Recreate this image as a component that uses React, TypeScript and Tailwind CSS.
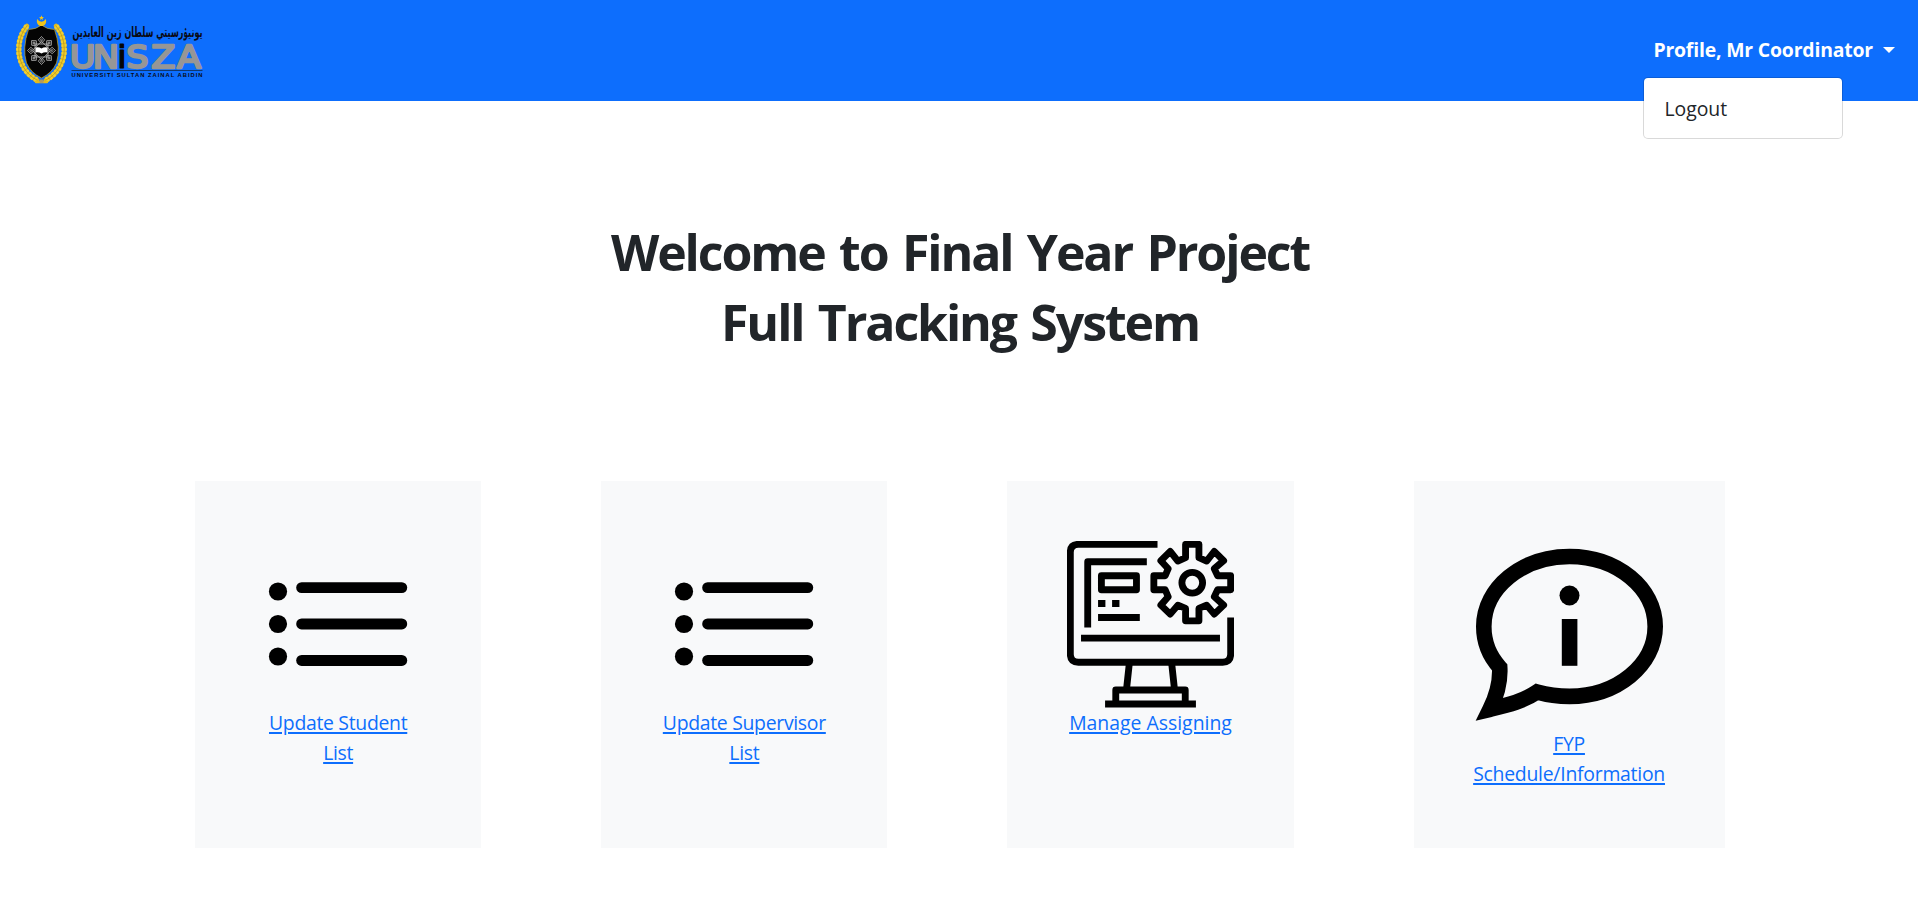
import React from "react";

const font = "font-['Open_Sans','Noto_Sans',sans-serif]";

function Laurel() {
  return (
    <g fill="none" strokeLinecap="round">
      {["", "translate(83 0) scale(-1 1)"].map((t) => (
        <g key={t} transform={t}>
          <path d="M27 26C21 33 18.500 42 18.800 51C19.200 62 25.500 74.500 37 80" stroke="#e2bb1e" strokeWidth="4.600" />
          <path d="M27 26C21 33 18.500 42 18.800 51C19.200 62 25.500 74.500 37 80" stroke="#f0cf30" strokeWidth="5.400" strokeDasharray="2.600 1.400" strokeLinecap="butt" />
          <path d="M27 26C21 33 18.500 42 18.800 51C19.200 62 25.500 74.500 37 80" stroke="#a5871c" strokeWidth="0.600" />
        </g>
      ))}
      <path d="M36 82h11" stroke="#e2bb1e" strokeWidth="2.400" />
      <path d="M39.500 79.500h4v3.500h-4Z" fill="#b79a5a" />
    </g>
  );
}

function Logo() {
  return (
    <svg width="220" height="101" viewBox="0 0 220 101" className="block shrink-0 overflow-visible" aria-label="UniSZA">
      <Laurel />
      <path d="M28.500 29.500Q36 29.500 41.500 25Q47 29.500 54.500 29.500Q61 48 56.500 63Q52 73 41.500 78Q31 73 26.500 63Q22 48 28.500 29.500Z" fill="#050505" stroke="#c9a51c" strokeWidth="0.700" />
      <path d="M37.400 19a4.700 4.700 0 1 0 8.200 0a4.500 4.500 0 0 1 -8.200 0Z" fill="#f0c419" />
      <path d="M41.500 15.300l.7 1.700 1.800.1-1.400 1.100.5 1.700-1.600-1-1.600 1 .5-1.700-1.400-1.100 1.800-.1Z" fill="#f0c419" />
      <g fill="none" stroke="#b8b8b8" strokeWidth="0.800">
        {[0, 45, 90, 135, 180, 225, 270, 315].map((r) => (
          <g key={r} transform={`rotate(${r} 41.5 50.5)`}>
            <path d="M41.500 36.500l3.200 3.400-3.200 3.400-3.200-3.400Z" />
            <path d="M41.500 38.700l1.100 1.200-1.100 1.200-1.100-1.200Z" />
          </g>
        ))}
        <rect x="35" y="44" width="13" height="13" />
        <rect x="35" y="44" width="13" height="13" transform="rotate(45 41.5 50.5)" />
      </g>
      <path d="M35.500 47.500q3-1 6 1 3-2 6-1v5q-3-1-6 1-3-2-6-1Z" fill="#fff" />
      <text x="202.500" y="36.500" direction="rtl" textLength="130" lengthAdjust="spacingAndGlyphs" fontFamily="DejaVu Sans" fontWeight="700" fontSize="14" fill="#0a0a14">يونيۏرسيتي سلطان زين العابدين</text>
      <text transform="scale(1.080 1)" y="67.600" textAnchor="middle" fontFamily="DejaVu Sans" fontSize="32.500" fill="#969696" stroke="#969696" strokeWidth="2.400" strokeLinejoin="round">
        <tspan x="76.400">U</tspan>
        <tspan x="98">N</tspan>
        <tspan x="112.800" fill="#050505" stroke="#050505" strokeWidth="1.200">i</tspan>
        <tspan x="127.300">S</tspan>
        <tspan x="151.300">Z</tspan>
        <tspan x="175">A</tspan>
      </text>
      <rect x="71.500" y="70.300" width="131" height="0.700" fill="#123" />
      <text x="71.500" y="77" textLength="131" fontFamily="Liberation Sans" fontWeight="700" fontSize="5.800" fill="#0a0a14">UNIVERSITI SULTAN ZAINAL ABIDIN</text>
    </svg>
  );
}

function ListIcon() {
  return (
    <svg width="166" height="167" viewBox="255 541 166 167" className="block">
      <g fill="#000">
        <circle cx="278" cy="591.500" r="9.100" />
        <circle cx="278" cy="624" r="9.100" />
        <circle cx="278" cy="656.500" r="9.100" />
        <rect x="296.200" y="582.200" width="111" height="10.900" rx="5.400" />
        <rect x="296.200" y="618.500" width="111" height="10.900" rx="5.400" />
        <rect x="296.200" y="655" width="111" height="10.900" rx="5.400" />
      </g>
    </svg>
  );
}

function MonitorIcon() {
  return (
    <svg width="167" height="167" viewBox="0 0 500 500" className="block" fill="none" stroke="#000" strokeWidth="20.500" strokeLinejoin="round">
      <path d="M271 10H34Q10 10 10 34V339Q10 363 34 363H466Q490 363 490 339V229" />
      <path d="M239 62H62V259M42 291H458M93 229H218M93 187h22M135 187h22" />
      <rect x="103" y="104" width="105" height="42" />
      <path d="M187 363L178 446M313 363L322 446M146 478V446H354V478M114 488H386" />
      <circle cx="375" cy="125" r="31" />
      <path d="M355 50V10H395V50L418 60L441 31L469 59L441 83L451 104H490V146H451L441 167L469 192L441 219L418 192L395 202V239H355V202L332 192L309 219L281 192L303 167L294 146H260V104H294L303 83L281 59L309 31L332 60Z" />
    </svg>
  );
}

function InfoIcon() {
  return (
    <svg width="191" height="188" viewBox="1474 541 191 188" className="block">
      <path fill="none" stroke="#000" strokeWidth="15.600" d="M1499.700 667.400C1490 656.800 1483.800 642 1483.800 626.600C1483.800 588 1522 556.500 1569.500 556.500C1617 556.500 1655.200 588 1655.200 626.600C1655.200 665 1617 696.400 1569.500 696.400C1558.500 696.400 1547 694.800 1537 692C1522.700 701.500 1508.500 704.800 1490 709.300C1498 693 1500.500 681 1499.700 667.400Z" />
      <circle cx="1569.500" cy="595.500" r="10" />
      <rect x="1561.800" y="619" width="15.600" height="46.800" />
    </svg>
  );
}

const link = "text-center text-[19.4px] leading-[30px] text-[#0d6efd] underline decoration-[2px] underline-offset-[2px]";

function Card({ icon, lines, wide, tracking }: { icon: React.ReactNode; lines: string[]; wide?: boolean; tracking: string }) {
  return (
    <div className="w-[406.2px] shrink-0">
      <a href="#" className={`flex h-[367px] flex-col items-center bg-[#f8f9fa] pt-[60px] ${wide ? "w-[311px]" : "w-[286.25px]"}`}>
        {icon}
        {lines.map((l) => (
          <span key={l} className={`${link} ${tracking}`}>{l}</span>
        ))}
      </a>
    </div>
  );
}

export default function App() {
  return (
    <div className={`min-h-screen overflow-hidden bg-white text-[#212529] ${font}`}>
      <nav className="flex h-[101px] items-center justify-between bg-[#0d6efd] pr-[23px]">
        <Logo />
        <div className="relative flex items-center gap-[10px] pb-[2px]">
          <span className="whitespace-nowrap text-[19.4px] leading-[30px] font-bold tracking-[-0.17px] text-white">Profile, Mr Coordinator</span>
          <span className="border-x-[6px] border-t-[6px] border-x-transparent border-t-white" />
          <div className="absolute top-[42px] left-[-10px] h-[62px] w-[200px] rounded-[5px] border border-black/15 bg-white bg-clip-padding px-5 pt-4 text-[19.4px] leading-[30px]">Logout</div>
        </div>
      </nav>
      <main>
        <h1 className="pt-[116px] pl-[2px] text-center text-[50px] leading-[70px] font-bold tracking-[-2.1px] [word-spacing:3.5px]">
          Welcome to Final Year Project<br />Full Tracking System
        </h1>
        <div className="mt-[124px] flex pl-[195px]">
          <Card icon={<ListIcon />} lines={["Update Student", "List"]} tracking="tracking-[-0.3px]" />
          <Card icon={<ListIcon />} lines={["Update Supervisor", "List"]} tracking="tracking-[-0.3px]" />
          <Card icon={<MonitorIcon />} lines={["Manage Assigning"]} tracking="tracking-[0px]" />
          <Card icon={<InfoIcon />} lines={["FYP", "Schedule/Information"]} wide tracking="tracking-[-0.25px]" />
        </div>
      </main>
    </div>
  );
}
